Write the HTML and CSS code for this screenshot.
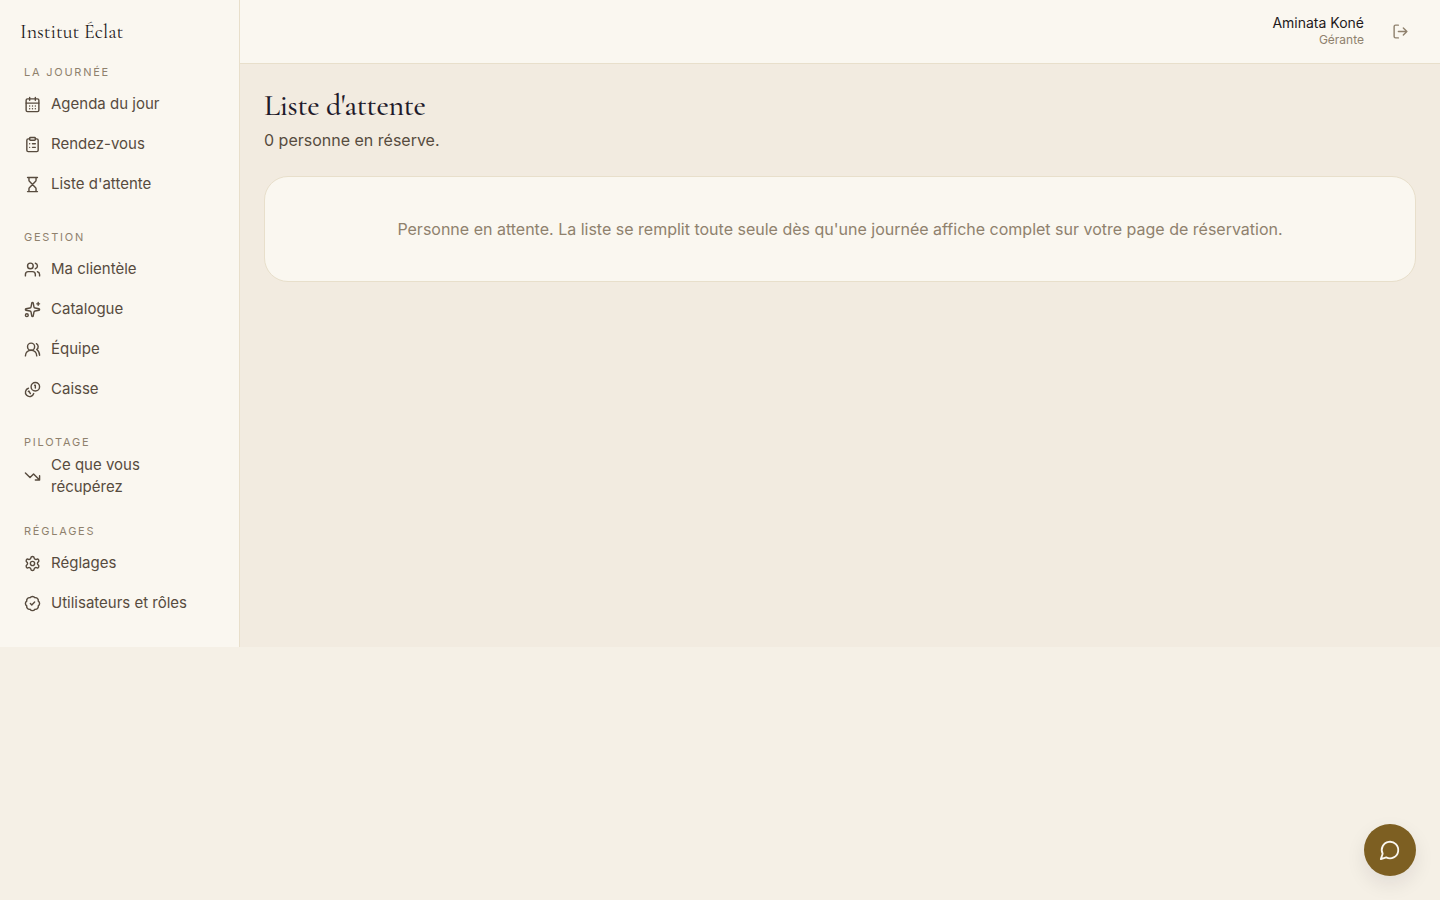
FILE: index.html
```html
<!DOCTYPE html>
<html lang="fr">
<head>
    <meta charset="UTF-8">
    <meta name="viewport" content="width=device-width, initial-scale=1.0">
    <title>Liste d'attente - Institut Éclat</title>
    <link rel="stylesheet" href="styles.css">
</head>
<body>
    <div class="app">
        <aside class="sidebar">
            <a href="#" class="brand">Institut Éclat</a>
            <nav class="menu">
                <section>
                    <h2>La journée</h2>
                    <a href="#">
                        <svg class="icon" viewBox="0 0 24 24"><path d="M8 2v4M16 2v4M3 10h18M8 14h.01M12 14h.01M16 14h.01M8 18h.01M12 18h.01M16 18h.01"/><rect width="18" height="18" x="3" y="4" rx="2"/></svg>
                        <span>Agenda du jour</span>
                    </a>
                    <a href="#">
                        <svg class="icon" viewBox="0 0 24 24"><rect width="8" height="4" x="8" y="2" rx="1"/><path d="M16 4h2a2 2 0 0 1 2 2v14a2 2 0 0 1-2 2H6a2 2 0 0 1-2-2V6a2 2 0 0 1 2-2h2M12 11h4M12 16h4M8 11h.01M8 16h.01"/></svg>
                        <span>Rendez-vous</span>
                    </a>
                    <a href="#">
                        <svg class="icon" viewBox="0 0 24 24"><path d="M5 22h14M5 2h14M17 22v-4.172a2 2 0 0 0-.586-1.414L12 12l-4.414 4.414A2 2 0 0 0 7 17.828V22M7 2v4.172a2 2 0 0 0 .586 1.414L12 12l4.414-4.414A2 2 0 0 0 17 6.172V2"/></svg>
                        <span>Liste d'attente</span>
                    </a>
                </section>
                <section>
                    <h2>Gestion</h2>
                    <a href="#">
                        <svg class="icon" viewBox="0 0 24 24"><path d="M16 21v-2a4 4 0 0 0-4-4H6a4 4 0 0 0-4 4v2M16 3.128a4 4 0 0 1 0 7.744M22 21v-2a4 4 0 0 0-3-3.87"/><circle cx="9" cy="7" r="4"/></svg>
                        <span>Ma clientèle</span>
                    </a>
                    <a href="#">
                        <svg class="icon" viewBox="0 0 24 24"><path d="M11.017 2.814a1 1 0 0 1 1.966 0l1.051 5.558a2 2 0 0 0 1.594 1.594l5.558 1.051a1 1 0 0 1 0 1.966l-5.558 1.051a2 2 0 0 0-1.594 1.594l-1.051 5.558a1 1 0 0 1-1.966 0l-1.051-5.558a2 2 0 0 0-1.594-1.594l-5.558-1.051a1 1 0 0 1 0-1.966l5.558-1.051a2 2 0 0 0 1.594-1.594zM20 2v4M22 4h-4"/><circle cx="4" cy="20" r="2"/></svg>
                        <span>Catalogue</span>
                    </a>
                    <a href="#">
                        <svg class="icon" viewBox="0 0 24 24"><path d="M18 21a8 8 0 0 0-16 0"/><circle cx="10" cy="8" r="5"/><path d="M22 20c0-3.37-2-6.5-4-8a5 5 0 0 0-.45-8.3"/></svg>
                        <span>Équipe</span>
                    </a>
                    <a href="#">
                        <svg class="icon" viewBox="0 0 24 24"><path d="M13.744 17.736a6 6 0 1 1-7.48-7.48M15 6h1v4M6.134 14.768l.866-.5 2 3.464"/><circle cx="16" cy="8" r="6"/></svg>
                        <span>Caisse</span>
                    </a>
                </section>
                <section>
                    <h2>Pilotage</h2>
                    <a href="#">
                        <svg class="icon" viewBox="0 0 24 24"><path d="M16 17h6v-6M22 17l-8.500-8.500-5 5L2 7"/></svg>
                        <span>Ce que vous récupérez</span>
                    </a>
                </section>
                <section>
                    <h2>Réglages</h2>
                    <a href="#">
                        <svg class="icon" viewBox="0 0 24 24"><path d="M9.671 4.136a2.34 2.34 0 0 1 4.659 0 2.34 2.34 0 0 0 3.319 1.915 2.34 2.34 0 0 1 2.33 4.033 2.34 2.34 0 0 0 0 3.831 2.34 2.34 0 0 1-2.33 4.033 2.34 2.34 0 0 0-3.319 1.915 2.34 2.34 0 0 1-4.659 0 2.34 2.34 0 0 0-3.32-1.915 2.34 2.34 0 0 1-2.33-4.033 2.34 2.34 0 0 0 0-3.831A2.34 2.34 0 0 1 6.35 6.051a2.34 2.34 0 0 0 3.319-1.915"/><circle cx="12" cy="12" r="3"/></svg>
                        <span>Réglages</span>
                    </a>
                    <a href="#">
                        <svg class="icon" viewBox="0 0 24 24"><path d="M3.85 8.62a4 4 0 0 1 4.78-4.77 4 4 0 0 1 6.74 0 4 4 0 0 1 4.78 4.78 4 4 0 0 1 0 6.74 4 4 0 0 1-4.77 4.78 4 4 0 0 1-6.75 0 4 4 0 0 1-4.78-4.77 4 4 0 0 1 0-6.76ZM9 12l2 2 4-4"/></svg>
                        <span>Utilisateurs et rôles</span>
                    </a>
                </section>
            </nav>
        </aside>

        <div class="content">
            <header class="topbar">
                <div class="user">
                    <span class="user-name">Aminata Koné</span>
                    <span class="user-role">Gérante</span>
                </div>
                <button type="button" class="logout" aria-label="Se déconnecter">
                    <svg class="icon" viewBox="0 0 24 24"><path d="M16 17l5-5-5-5M21 12H9M9 21H5a2 2 0 0 1-2-2V5a2 2 0 0 1 2-2h4"/></svg>
                </button>
            </header>
            <main>
                <h1>Liste d'attente</h1>
                <p class="count">0 personne en réserve.</p>
                <div class="card">
                    <p>Personne en attente. La liste se remplit toute seule dès qu'une journée affiche complet sur votre page de réservation.</p>
                </div>
            </main>
        </div>
    </div>

    <button type="button" class="chat" aria-label="Ouvrir la discussion">
        <svg class="icon" viewBox="0 0 24 24"><path d="M7.9 20A9 9 0 1 0 4 16.1L2 22Z"/></svg>
    </button>
</body>
</html>
```
FILE: styles.css
```css
* {
    box-sizing: border-box;
    margin: 0;
    padding: 0;
}
body {
    background-color: #f5f0e6;
    color: #1f1a1c;
    font-family: Inter, "Liberation Sans", sans-serif;
    font-size: 16px;
    line-height: 24px;
}
a {
    color: inherit;
    text-decoration: none;
}
button {
    border: none;
    cursor: pointer;
}
.icon {
    flex-shrink: 0;
    width: 17px;
    height: 17px;
    fill: none;
    stroke: currentColor;
    stroke-width: 2;
    stroke-linecap: round;
    stroke-linejoin: round;
}
.app {
    display: flex;
    background-color: #f2ebe0;
}

/* sidebar */
.sidebar {
    flex-shrink: 0;
    width: 240px;
    padding-bottom: 24px;
    background-color: #faf7f0;
    border-right: 1px solid #e8dfcb;
}
.brand {
    display: flex;
    align-items: center;
    height: 64px;
    padding: 0 20px;
    font-family: "Cormorant Garamond", "Liberation Serif", serif;
    font-size: 20px;
}
.menu {
    display: flex;
    flex-direction: column;
    gap: 25px;
    padding: 0 12px;
}
.menu h2 {
    margin-bottom: 4px;
    padding: 0 12px;
    color: #8f816d;
    font-size: 11px;
    font-weight: 400;
    line-height: 16px;
    letter-spacing: 0.16em;
    text-transform: uppercase;
}
.menu a {
    display: flex;
    align-items: center;
    gap: 10px;
    min-height: 40px;
    padding: 0 12px;
    border-radius: 12px;
    color: #574b3e;
    font-size: 15px;
    line-height: 22px;
}
.menu a:hover {
    background-color: #f2ebe0;
}

/* top bar */
.content {
    flex: 1;
    min-width: 0;
}
.topbar {
    display: flex;
    align-items: center;
    justify-content: flex-end;
    gap: 16px;
    height: 64px;
    padding: 0 20px;
    background-color: #faf7f0;
    border-bottom: 1px solid #e8dfcb;
}
.user {
    display: flex;
    flex-direction: column;
    text-align: right;
}
.user-name {
    font-size: 14px;
    line-height: 16px;
}
.user-role {
    color: #8f816d;
    font-size: 12px;
    line-height: 17px;
}
.logout {
    display: flex;
    align-items: center;
    justify-content: center;
    width: 40px;
    height: 40px;
    background: none;
    color: #8f816d;
}

/* page */
main {
    padding: 24px;
}
h1 {
    color: #1f1a2b;
    font-family: "Cormorant Garamond", "Liberation Serif", serif;
    font-size: 30px;
    font-weight: 500;
    line-height: 36px;
    letter-spacing: -0.01em;
}
.count {
    margin: 4px 0 24px;
    color: #574b3e;
}
.card {
    padding: 40px;
    background-color: #faf7f0;
    border: 1px solid #e8dfcb;
    border-radius: 24px;
    color: #8f816d;
    text-align: center;
}

.chat {
    position: fixed;
    right: 24px;
    bottom: 24px;
    display: flex;
    align-items: center;
    justify-content: center;
    width: 52px;
    height: 52px;
    border-radius: 50%;
    background-color: #7d5f22;
    color: #faf7f0;
    box-shadow: 0 8px 20px rgba(31, 26, 43, 0.09);
}
.chat .icon {
    width: 22px;
    height: 22px;
}
```
